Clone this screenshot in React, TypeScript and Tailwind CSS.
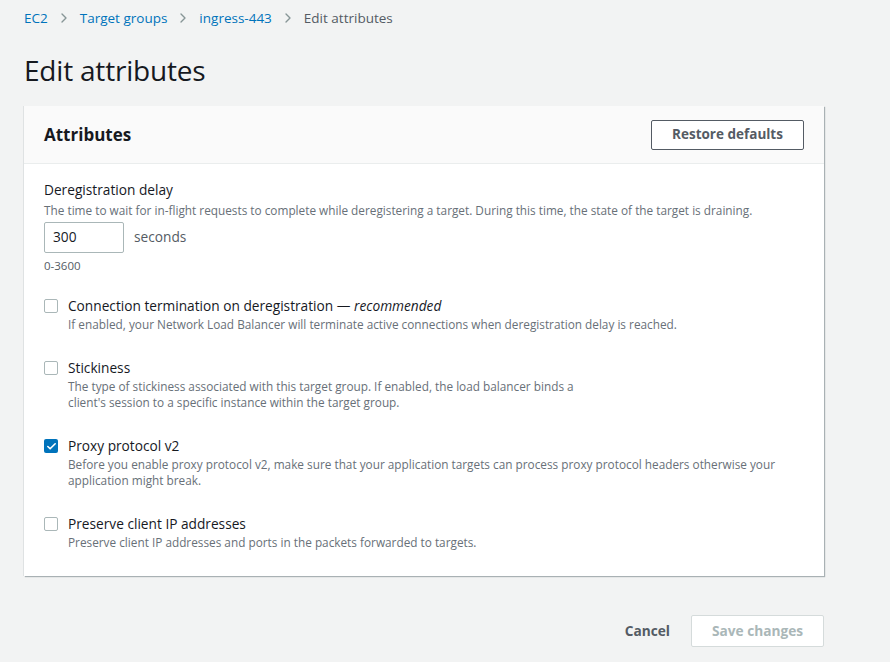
import { Check, ChevronRight } from "lucide-react";

type Attr = {
  label: string;
  extra?: string;
  desc: string[];
  checked: boolean;
};

const attrs: Attr[] = [
  {
    label: "Connection termination on deregistration",
    extra: "recommended",
    desc: ["If enabled, your Network Load Balancer will terminate active connections when deregistration delay is reached."],
    checked: false,
  },
  {
    label: "Stickiness",
    desc: [
      "The type of stickiness associated with this target group. If enabled, the load balancer binds a",
      "client's session to a specific instance within the target group.",
    ],
    checked: false,
  },
  {
    label: "Proxy protocol v2",
    desc: [
      "Before you enable proxy protocol v2, make sure that your application targets can process proxy protocol headers otherwise your",
      "application might break.",
    ],
    checked: true,
  },
  {
    label: "Preserve client IP addresses",
    desc: ["Preserve client IP addresses and ports in the packets forwarded to targets."],
    checked: false,
  },
];

function Box({ checked }: { checked: boolean }) {
  if (checked) {
    return (
      <span className="mt-[3px] flex h-[14px] w-[14px] shrink-0 items-center justify-center rounded-[2px] bg-[#0073bb]">
        <Check size={11} strokeWidth={3.5} className="text-white" />
      </span>
    );
  }
  return <span className="mt-[3px] h-[14px] w-[14px] shrink-0 rounded-[2px] border border-[#aab7b8] bg-white" />;
}

export default function App() {
  return (
    <div
      className="min-h-[662px] bg-[#f2f3f3] px-6 pt-[9px] text-[#16191f]"
      style={{ fontFamily: '"Open Sans", "Noto Sans", sans-serif' }}
    >
      <nav className="flex items-center gap-[8px] text-[13.5px] leading-[18px]">
        <span className="text-[#0073bb]">EC2</span>
        <ChevronRight size={16} className="text-[#879596]" />
        <span className="text-[#0073bb]">Target groups</span>
        <ChevronRight size={16} className="text-[#879596]" />
        <span className="text-[#0073bb]">ingress-443</span>
        <ChevronRight size={16} className="text-[#879596]" />
        <span className="text-[#545b64]">Edit attributes</span>
      </nav>

      <h1 className="mt-[27px] text-[28px] leading-[32px] tracking-[-0.2px]">Edit attributes</h1>

      <div className="mt-[20px] w-[800px] bg-white shadow-[1px_1px_1px_0_rgba(0,28,36,0.3),_-1px_0_0_0_rgba(0,28,36,0.08)]">
        <div className="flex h-[58px] items-center justify-between border-b border-[#eaeded] bg-[#fafafa] px-5">
          <h2 className="text-[17px] font-bold">Attributes</h2>
          <button className="h-[30px] w-[153px] rounded-[2px] border border-[#545b64] bg-white text-[13.5px] font-bold text-[#545b64]">
            Restore defaults
          </button>
        </div>

        <div className="px-5 pb-[26px] pt-[16px]">
          <div className="text-[13.7px] leading-[20px]">Deregistration delay</div>
          <div className="mt-[2px] text-[11.8px] leading-[16px] text-[#687078]">
            The time to wait for in-flight requests to complete while deregistering a target. During this time, the state of the target is draining.
          </div>
          <div className="mt-[4px] flex items-center gap-[10px]">
            <div className="flex h-[31px] w-[80px] items-center rounded-[2px] border border-[#aab7b8] px-[8px] text-[13.7px]">
              300
            </div>
            <span className="text-[13.7px] text-[#545b64]">seconds</span>
          </div>
          <div className="mt-[5px] text-[11.5px] leading-[16px] text-[#545b64]">0-3600</div>

          <div className="mt-[22px] flex flex-col gap-[26px]">
            {attrs.map((a) => (
              <div key={a.label} className="flex gap-[10px]">
                <Box checked={a.checked} />
                <div>
                  <div className="text-[13.7px] leading-[20px]">
                    {a.label}
                    {a.extra && (
                      <>
                        {" — "}
                        <i>{a.extra}</i>
                      </>
                    )}
                  </div>
                  <div className="text-[11.8px] leading-[16px] text-[#687078]">
                    {a.desc.map((d) => (
                      <div key={d}>{d}</div>
                    ))}
                  </div>
                </div>
              </div>
            ))}
          </div>
        </div>
      </div>

      <div className="mt-[39px] flex w-[800px] items-center justify-end gap-[21px]">
        <span className="text-[13.7px] font-bold text-[#545b64]">Cancel</span>
        <button className="h-[32px] w-[133px] rounded-[2px] border border-[#d5dbdb] bg-white text-[13.7px] font-bold text-[#aab7b8]">
          Save changes
        </button>
      </div>
    </div>
  );
}
